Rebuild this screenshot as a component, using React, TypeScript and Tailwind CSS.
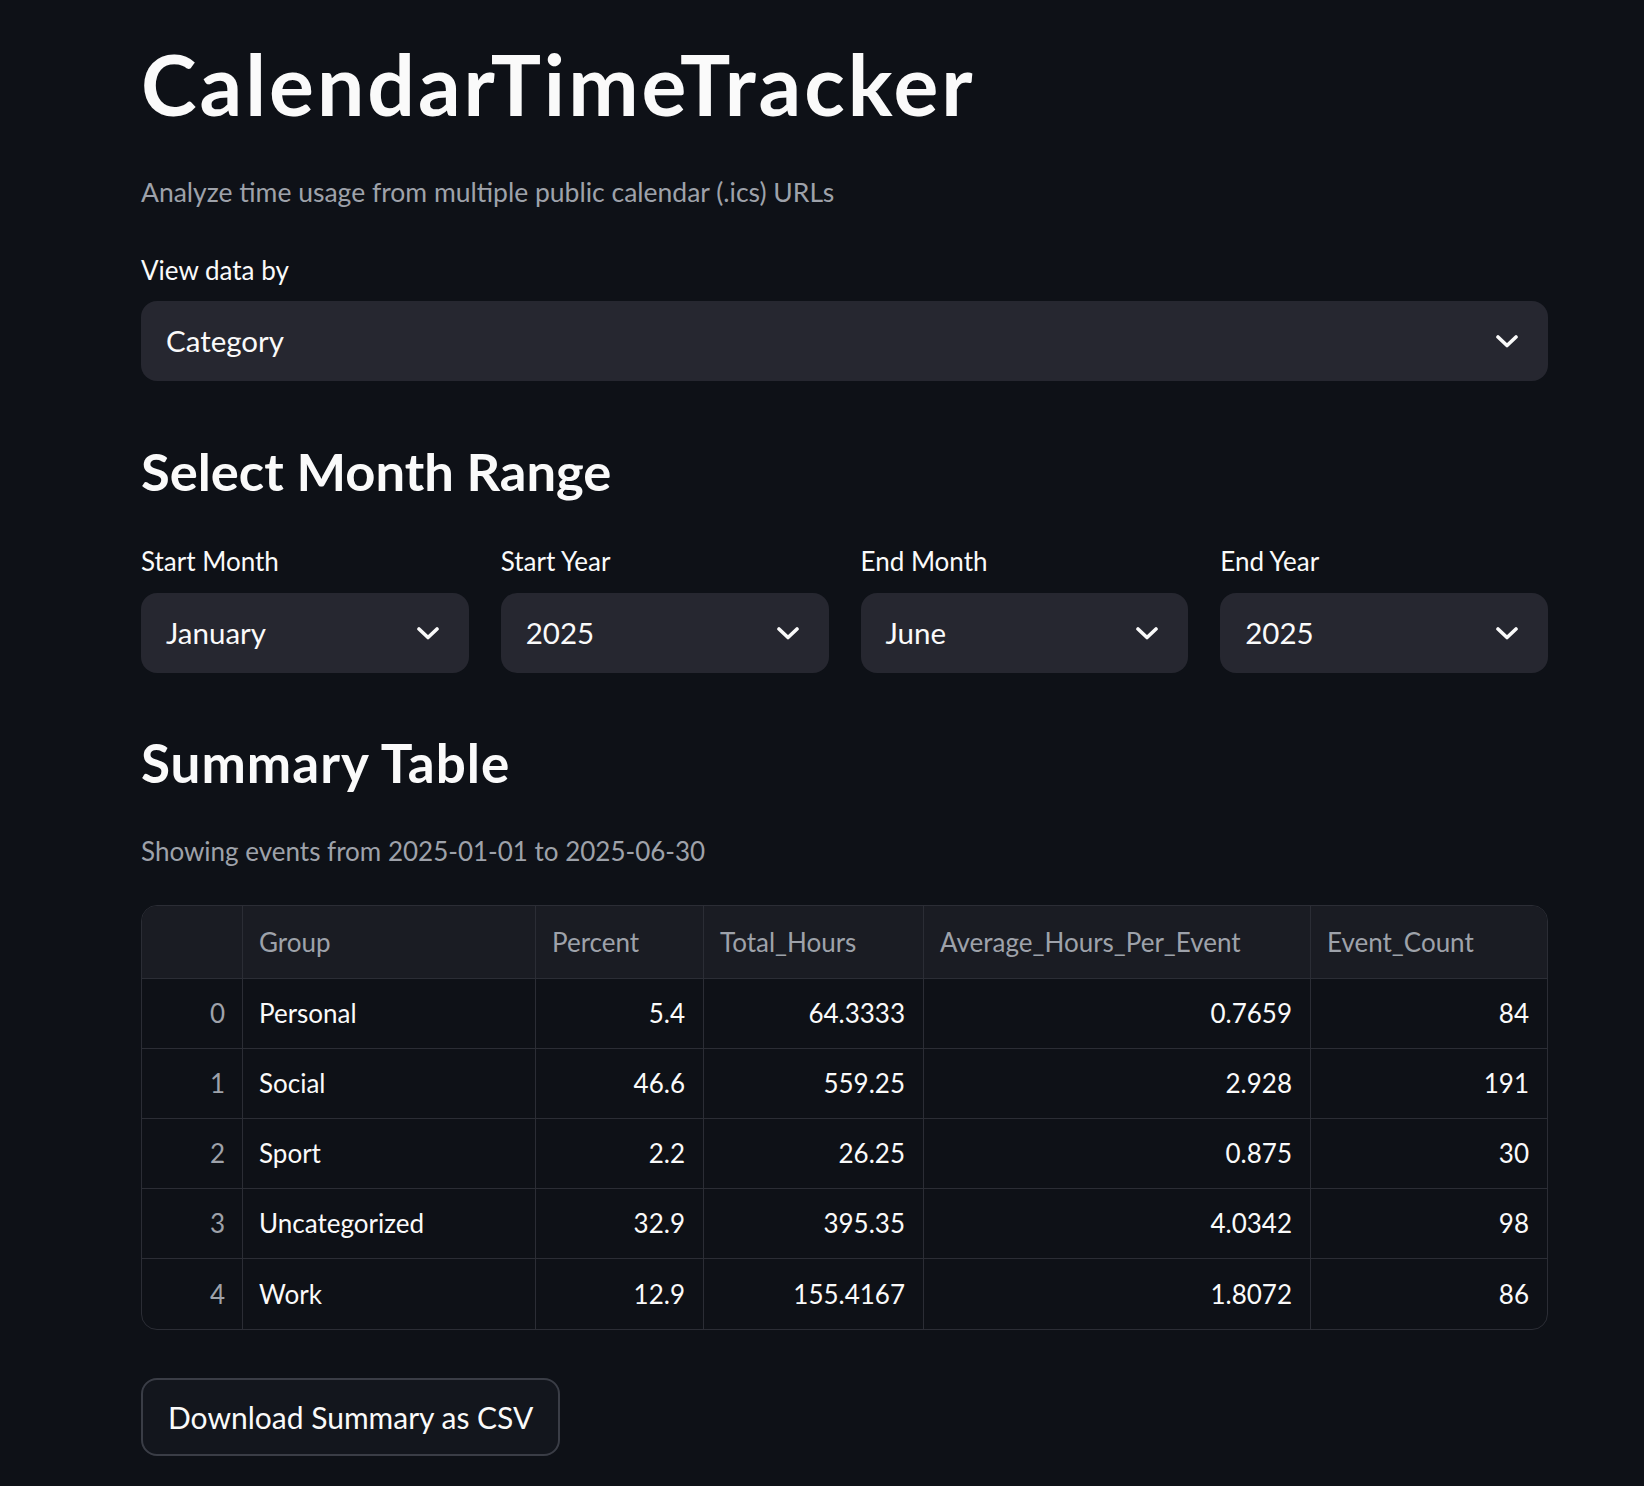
import * as React from "react"

const rows = [
  { idx: 0, group: "Personal", percent: "5.4", total: "64.3333", avg: "0.7659", count: "84" },
  { idx: 1, group: "Social", percent: "46.6", total: "559.25", avg: "2.928", count: "191" },
  { idx: 2, group: "Sport", percent: "2.2", total: "26.25", avg: "0.875", count: "30" },
  { idx: 3, group: "Uncategorized", percent: "32.9", total: "395.35", avg: "4.0342", count: "98" },
  { idx: 4, group: "Work", percent: "12.9", total: "155.4167", avg: "1.8072", count: "86" },
]

const cols = "grid grid-cols-[101px_293px_168px_220px_387px_1fr]"

function Chevron() {
  return (
    <svg width="22" height="13" viewBox="0 0 22 13" fill="none">
      <polyline
        points="2,2 11,10.5 20,2"
        stroke="#fafafa"
        strokeWidth="3.6"
        strokeLinecap="round"
        strokeLinejoin="round"
      />
    </svg>
  )
}

function SelectBox({ value }: { value: string }) {
  return (
    <div className="flex h-[80px] items-center justify-between rounded-[16px] bg-[#262730] pl-[25px] pr-[30px]">
      <span className="text-[29.5px] leading-none text-[#fafafa]">{value}</span>
      <Chevron />
    </div>
  )
}

function Field({ label, value }: { label: string; value: string }) {
  return (
    <div className="flex flex-col">
      <div className="h-[40px] text-[26px] leading-[40px] text-[#fafafa]">{label}</div>
      <div className="mt-[12px]">
        <SelectBox value={value} />
      </div>
    </div>
  )
}

export default function App() {
  return (
    <div
      className="min-h-screen bg-[#0e1117] pl-[141px] text-[#fafafa]"
      style={{ fontFamily: "Lato, 'Noto Sans', sans-serif" }}
    >
      <div className="w-[1407px] pt-[34px] pb-[31px]">
        <h1 className="h-[100px] text-[84px] font-bold leading-[100px] tracking-[3px]">
          CalendarTimeTracker
        </h1>

        <p className="mt-[38px] h-[40px] text-[26.5px] leading-[40px] text-[#9ea2aa]">
          Analyze time usage from multiple public calendar (.ics) URLs
        </p>

        <div className="mt-[38px] h-[40px] text-[26px] leading-[40px]">View data by</div>
        <div className="mt-[11px]">
          <SelectBox value="Category" />
        </div>

        <h3 className="mt-[55px] h-[70px] text-[52.5px] font-bold leading-[70px]">
          Select Month Range
        </h3>

        <div className="mt-[35px] grid grid-cols-4 gap-[32px]">
          <Field label="Start Month" value="January" />
          <Field label="Start Year" value="2025" />
          <Field label="End Month" value="June" />
          <Field label="End Year" value="2025" />
        </div>

        <h3 className="mt-[55px] h-[70px] text-[53px] font-bold leading-[70px] tracking-[1px]">
          Summary Table
        </h3>

        <p className="mt-[33px] h-[40px] text-[26px] leading-[40px] text-[#9ea2aa]">
          Showing events from 2025-01-01 to 2025-06-30
        </p>

        <div className="mt-[34px] overflow-hidden rounded-[16px] border border-[#2b2d35] text-[26px]">
          <div className={`${cols} h-[73px] border-b border-[#2b2d35] bg-[#1a1c23] text-[#9ea2aa]`}>
            <div className="border-r border-[#2b2d35]" />
            <div className="flex items-center border-r border-[#2b2d35] px-[16px]">Group</div>
            <div className="flex items-center border-r border-[#2b2d35] px-[16px]">Percent</div>
            <div className="flex items-center border-r border-[#2b2d35] px-[16px]">Total_Hours</div>
            <div className="flex items-center border-r border-[#2b2d35] px-[16px]">Average_Hours_Per_Event</div>
            <div className="flex items-center px-[16px]">Event_Count</div>
          </div>
          {rows.map((r, i) => (
            <div
              key={r.idx}
              className={`${cols} h-[70px] ${i < rows.length - 1 ? "border-b border-[#2b2d35]" : ""}`}
            >
              <div className="flex items-center justify-end border-r border-[#2b2d35] px-[17px] text-[#9ea2aa]">
                {r.idx}
              </div>
              <div className="flex items-center border-r border-[#2b2d35] px-[16px]">{r.group}</div>
              <div className="flex items-center justify-end border-r border-[#2b2d35] px-[18px]">{r.percent}</div>
              <div className="flex items-center justify-end border-r border-[#2b2d35] px-[18px]">{r.total}</div>
              <div className="flex items-center justify-end border-r border-[#2b2d35] px-[18px]">{r.avg}</div>
              <div className="flex items-center justify-end px-[18px]">{r.count}</div>
            </div>
          ))}
        </div>

        <button className="mt-[48px] h-[78px] rounded-[16px] border-2 border-[#3a3d46] bg-[#13161d] px-[25px] text-[30px] leading-none text-[#fafafa]">
          Download Summary as CSV
        </button>
      </div>
    </div>
  )
}
